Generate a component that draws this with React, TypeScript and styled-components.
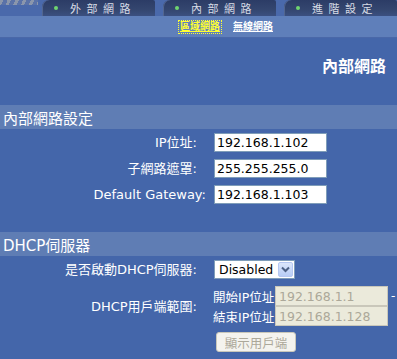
import styled, { createGlobalStyle } from "styled-components";

const GlobalStyle = createGlobalStyle`
  html, body {
    margin: 0;
    padding: 0;
    background: #4466aa;
  }

  body {
    font-family: "DejaVu Sans", "Noto Sans CJK TC", sans-serif;
    color: #ffffff;
  }
`;

const FONT = `"DejaVu Sans", "Noto Sans CJK TC", sans-serif`;

const tabs = ["外部網路", "內部網路", "進階設定"];

export default function App() {
  return (
    <Page>
      <GlobalStyle />

      <TabBar>
        <Stripes />
        {tabs.map((t) => (
          <Tab key={t}>
            <Dot />
            <TabText>{t.split("").join(" ")}</TabText>
          </Tab>
        ))}
      </TabBar>

      <SubNav>
        <SubLink active>區域網路</SubLink>
        <SubLink>無線網路</SubLink>
      </SubNav>

      <PageTitle>內部網路</PageTitle>

      <SectionHeader>內部網路設定</SectionHeader>
      <Form>
        <Row>
          <Label>IP位址:</Label>
          <TextInput defaultValue="192.168.1.102" />
        </Row>
        <Row>
          <Label>子網路遮罩:</Label>
          <TextInput defaultValue="255.255.255.0" />
        </Row>
        <Row>
          <Label flush>Default Gateway:</Label>
          <TextInput defaultValue="192.168.1.103" />
        </Row>
      </Form>

      <SectionHeader>DHCP伺服器</SectionHeader>
      <Form>
        <Row>
          <Label>是否啟動DHCP伺服器:</Label>
          <Select>
            <span>Disabled</span>
            <SelectButton>
              <svg width="9" height="7" viewBox="0 0 9 7">
                <path d="M1 1.5 L4.5 5 L8 1.5" fill="none" stroke="#4d6185" strokeWidth="2" />
              </svg>
            </SelectButton>
          </Select>
        </Row>
        <RangeRow>
          <Label>DHCP用戶端範圍:</Label>
          <RangeList>
            <RangeLine>
              <RangeLabel>開始IP位址</RangeLabel>
              <DisabledInput disabled defaultValue="192.168.1.1" />
              <Dash>-</Dash>
            </RangeLine>
            <RangeLine>
              <RangeLabel>結束IP位址</RangeLabel>
              <DisabledInput disabled defaultValue="192.168.1.128" />
            </RangeLine>
          </RangeList>
        </RangeRow>
        <ButtonRow>
          <DisabledButton disabled>顯示用戶端</DisabledButton>
        </ButtonRow>
      </Form>
    </Page>
  );
}

const Page = styled.div`
  width: 397px;
  height: 359px;
  overflow: hidden;
  background: #4466aa;
`;

const TabBar = styled.div`
  position: relative;
  height: 16px;
  display: flex;
  gap: 8px;
  padding-left: 42px;
  background: #4a69ab;
`;

const Stripes = styled.div`
  position: absolute;
  left: 0;
  top: 0;
  width: 38px;
  height: 5px;
  background: repeating-linear-gradient(
    115deg,
    #8a96ac 0 3px,
    #5a72a8 3px 7px
  );
`;

const Tab = styled.div`
  width: 113px;
  height: 16px;
  box-sizing: border-box;
  display: flex;
  align-items: center;
  padding-left: 12px;
  border-radius: 7px 2px 0 0;
  background: linear-gradient(#2c3c66, #34466f 60%, #3b5080);
  box-shadow: inset 1px 0 0 #526690;
`;

const Dot = styled.span`
  width: 4px;
  height: 4px;
  border-radius: 50%;
  background: #6fd66f;
  margin-right: 12px;
`;

const TabText = styled.span`
  font-family: ${FONT};
  font-size: 11px;
  letter-spacing: 1px;
  color: #d8dce6;
  white-space: pre;
`;

const SubNav = styled.div`
  height: 21px;
  display: flex;
  align-items: center;
  gap: 9px;
  padding-left: 178px;
  background: #5f7fba;
  border-bottom: 1px solid #4a68a8;
`;

const SubLink = styled.span<{ active?: boolean }>`
  font-family: ${FONT};
  font-size: 10px;
  font-weight: bold;
  line-height: 12px;
  text-decoration: underline;
  color: ${(p) => (p.active ? "#ffff33" : "#ffffff")};
  border: 1px dotted ${(p) => (p.active ? "#ffff33" : "transparent")};
  padding: 0 1px;
`;

const PageTitle = styled.div`
  font-family: ${FONT};
  font-size: 16px;
  font-weight: bold;
  text-align: right;
  padding: 15px 11px 0 0;
  height: 46px;
  box-sizing: border-box;
  color: #ffffff;
`;

const SectionHeader = styled.div`
  height: 24px;
  display: flex;
  align-items: center;
  padding-left: 3px;
  font-family: ${FONT};
  font-size: 15px;
  color: #ffffff;
  background: #5f7db4;
  margin-top: 21px;
`;

const Form = styled.div`
  display: flex;
  flex-direction: column;
  padding-top: 4px;
`;

const Row = styled.div`
  height: 26px;
  display: flex;
  align-items: flex-start;
`;

const Label = styled.div<{ flush?: boolean }>`
  width: 206px;
  box-sizing: border-box;
  padding-right: ${(p) => (p.flush ? "0" : "9px")};
  flex-shrink: 0;
  text-align: right;
  font-family: ${FONT};
  font-size: 13px;
  line-height: 19px;
  white-space: nowrap;
  color: #ffffff;
  margin-right: 8px;
`;

const TextInput = styled.input`
  width: 113px;
  height: 19px;
  box-sizing: border-box;
  border: 1px solid #7f9db9;
  padding: 0 2px;
  font-family: ${FONT};
  font-size: 12.5px;
  color: #000000;
  background: #ffffff;
  outline: none;
`;

const Select = styled.div`
  width: 81px;
  height: 19px;
  box-sizing: border-box;
  border: 1px solid #7f9db9;
  background: #ffffff;
  display: flex;
  align-items: center;
  justify-content: space-between;
  padding: 0 1px 0 4px;
  font-family: ${FONT};
  font-size: 12.5px;
  color: #000000;
`;

const SelectButton = styled.span`
  width: 15px;
  height: 15px;
  box-sizing: border-box;
  display: flex;
  align-items: center;
  justify-content: center;
  border: 1px solid #b6c8f2;
  border-radius: 2px;
  background: linear-gradient(#dbe6fb, #b8cdf6);
`;

const RangeRow = styled.div`
  display: flex;
  align-items: center;
  height: 40px;
`;

const RangeList = styled.div`
  display: flex;
  flex-direction: column;
  margin-left: -1px;
`;

const RangeLine = styled.div`
  display: flex;
  align-items: center;
  height: 20px;
`;

const RangeLabel = styled.span`
  font-family: ${FONT};
  font-size: 12.5px;
  color: #ffffff;
  width: 62px;
  white-space: nowrap;
`;

const DisabledInput = styled.input`
  width: 113px;
  height: 20px;
  box-sizing: border-box;
  border: 1px solid #c9c7ba;
  padding: 0 3px;
  font-family: ${FONT};
  font-size: 12.5px;
  color: #aca899;
  background: #ebeadb;
  -webkit-text-fill-color: #aca899;
  opacity: 1;
`;

const Dash = styled.span`
  font-family: ${FONT};
  font-size: 12px;
  color: #ffffff;
  margin-left: 3px;
`;

const ButtonRow = styled.div`
  padding: 6px 0 0 216px;
`;

const DisabledButton = styled.button`
  width: 80px;
  height: 20px;
  box-sizing: border-box;
  border: 1px solid #c9c7ba;
  border-radius: 3px;
  background: #f4f3ee;
  font-family: ${FONT};
  font-size: 12.5px;
  color: #aca899;
  padding: 0;
`;
